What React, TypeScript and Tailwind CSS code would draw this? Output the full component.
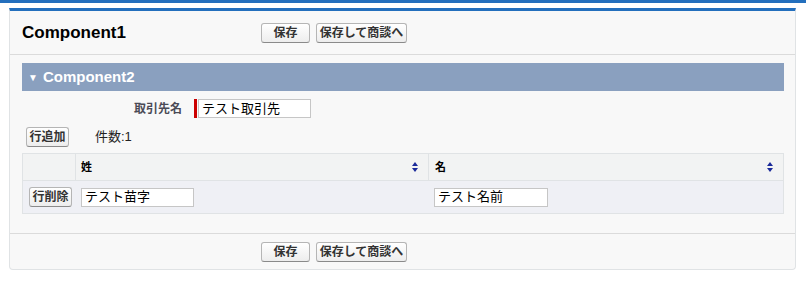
import React from "react";

const jp = "font-['Liberation_Sans','Noto_Sans_CJK_JP',sans-serif]";

function Btn({ children, className = "" }: { children: React.ReactNode; className?: string }) {
  return (
    <button
      className={`flex h-[20px] items-center justify-center whitespace-nowrap rounded-[3px] border border-[#b5b5b5] border-b-[#8a8a8a] bg-gradient-to-b from-white to-[#ededed] px-0 text-[12px] font-bold leading-none text-[#333] ${className}`}
    >
      {children}
    </button>
  );
}

function SortIcon() {
  return (
    <svg width="6" height="10" viewBox="0 0 6 10" className="shrink-0">
      <path d="M3 0 L6 4 L0 4 Z" fill="#1b2a9a" />
      <path d="M0 6 L6 6 L3 10 Z" fill="#1b2a9a" />
    </svg>
  );
}

function TextBox({ value, className = "" }: { value: string; className?: string }) {
  return (
    <div
      className={`flex h-[19px] items-center border border-[#c6c6c6] bg-white px-[3px] text-[13px] text-black ${className}`}
    >
      {value}
    </div>
  );
}

export default function App() {
  return (
    <div className={`h-[295px] w-[806px] bg-white ${jp}`}>
      <div className="h-[3px] bg-[#236fbd]" />

      <div className="ml-[9px] mt-[5px] w-[787px] rounded-b-[4px] border-x border-b border-t-[3px] border-x-[#e0e3e5] border-b-[#e0e3e5] border-t-[#236fbd] bg-[#f8f8f8]">
        {/* page block header */}
        <div className="flex h-[44px] items-center border-b border-[#dbdbdb] pl-[12px]">
          <h1 className="w-[239px] text-[17px] font-bold text-black">Component1</h1>
          <div className="flex gap-[6px]">
            <Btn className="w-[49px]">保存</Btn>
            <Btn className="w-[91px]">保存して商談へ</Btn>
          </div>
        </div>

        {/* body */}
        <div className="h-[178px] pl-[12px] pr-[11px] pt-[8px]">
          <div className="flex h-[28px] items-center bg-[#8aa0bf] pl-[6px] text-[15px] font-bold text-white">
            <span className="mr-[5px] text-[10px]">▼</span>
            Component2
          </div>

          <div className="mt-[8px] flex h-[19px] items-center">
            <span className="w-[160px] text-right text-[12px] font-bold text-[#4a4a56]">取引先名</span>
            <span className="ml-[12px] h-[19px] w-[3px] bg-[#c00]" />
            <TextBox value="テスト取引先" className="ml-[1px] w-[113px]" />
          </div>

          <div className="mt-[9px] flex h-[20px] items-center">
            <Btn className="ml-[4px] w-[43px]">行追加</Btn>
            <span className="ml-[26px] text-[13px] text-[#222]">件数:1</span>
          </div>

          <div className="mt-[6px] border border-[#e0e3e5]">
            <div className="flex h-[27px] border-b border-[#e0e3e5] bg-[#f2f3f3] text-[11px] font-bold text-black">
              <div className="w-[53px] border-r border-[#e0e3e5]" />
              <div className="flex w-[353px] items-center justify-between border-r border-[#e0e3e5] pl-[5px] pr-[10px]">
                <span>姓</span>
                <SortIcon />
              </div>
              <div className="flex flex-1 items-center justify-between pl-[6px] pr-[10px]">
                <span>名</span>
                <SortIcon />
              </div>
            </div>
            <div className="flex h-[32px] items-center bg-[#eff0f5]">
              <div className="w-[53px] pl-[6px]">
                <Btn className="w-[43px]">行削除</Btn>
              </div>
              <div className="w-[353px] pl-[5px]">
                <TextBox value="テスト苗字" className="w-[113px]" />
              </div>
              <div className="flex-1 pl-[5px]">
                <TextBox value="テスト名前" className="w-[114px]" />
              </div>
            </div>
          </div>
        </div>

        {/* footer */}
        <div className="flex h-[36px] items-center border-t border-[#dbdbdb] pl-[251px]">
          <div className="flex gap-[6px]">
            <Btn className="w-[49px]">保存</Btn>
            <Btn className="w-[91px]">保存して商談へ</Btn>
          </div>
        </div>
      </div>
    </div>
  );
}
